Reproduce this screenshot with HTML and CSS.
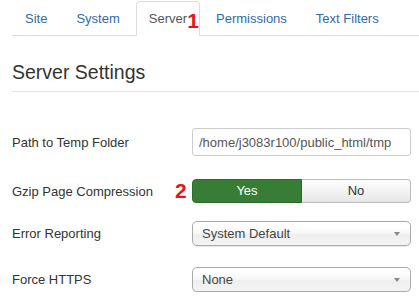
FILE: index.html
```html
<!DOCTYPE html>
<html lang="en">
<head>
  <meta charset="UTF-8">
  <title>Server Settings</title>
  <link rel="stylesheet" href="styles.css">
</head>
<body>
  <ul class="tabs">
    <li><a href="#">Site</a></li>
    <li><a href="#">System</a></li>
    <li class="active"><a href="#">Server</a><span class="marker marker-one">1</span></li>
    <li><a href="#">Permissions</a></li>
    <li><a href="#">Text Filters</a></li>
  </ul>

  <div class="content">
    <h2>Server Settings</h2>

    <div class="control-group">
      <label>Path to Temp Folder</label>
      <input class="field" type="text" value="/home/j3083r100/public_html/tmp">
    </div>

    <div class="control-group group-toggle">
      <label>Gzip Page Compression</label>
      <div class="toggle">
        <span class="marker marker-two">2</span>
        <span class="toggle-btn yes">Yes</span>
        <span class="toggle-btn no">No</span>
      </div>
    </div>

    <div class="control-group">
      <label>Error Reporting</label>
      <div class="select">System Default<span class="arrow"></span></div>
    </div>

    <div class="control-group">
      <label>Force HTTPS</label>
      <div class="select">None<span class="arrow"></span></div>
    </div>
  </div>
</body>
</html>
```

FILE: styles.css
```css
body {
  margin: 0;
  font-family: "Liberation Sans", Arial, sans-serif;
  font-size: 13px;
  color: #333;
  background: #fff;
}
.tabs {
  list-style: none;
  margin: 0 0 0 12px;
  padding: 1px 0 0;
  display: flex;
  gap: 3px;
  border-bottom: 1px solid #ddd;
}
.tabs li {
  position: relative;
}
.tabs a {
  display: block;
  height: 33px;
  line-height: 33px;
  padding: 0 12px;
  margin-bottom: -1px;
  border: 1px solid transparent;
  border-radius: 4px 4px 0 0;
  color: #2f6aa8;
  text-decoration: none;
}
.tabs .active a {
  border-color: #ddd;
  border-bottom-color: #fff;
  background: #fff;
  color: #555;
}
.marker {
  position: absolute;
  font-weight: bold;
  font-size: 21px;
  line-height: 21px;
  color: #e8141b;
}
.marker-one {
  right: 1px;
  top: 9px;
}
.marker-two {
  left: -17px;
  top: 1px;
}
.content {
  padding-left: 12px;
}
h2 {
  margin: 24px 0 36px;
  padding-bottom: 7px;
  font-size: 19.5px;
  line-height: 24px;
  font-weight: normal;
  border-bottom: 1px solid #e3e3e3;
}
.control-group {
  display: flex;
  align-items: center;
  margin-bottom: 18px;
}
.control-group:last-child {
  margin: 21px 0 0;
}
.control-group label {
  width: 180px;
}
.group-toggle {
  margin-top: 23px;
}
.field {
  width: 219px;
  height: 28px;
  box-sizing: border-box;
  padding: 0 6px;
  border: 1px solid #ccc;
  border-radius: 3px;
  font: inherit;
  color: #555;
}
.toggle {
  position: relative;
  display: flex;
  width: 219px;
  height: 24px;
}
.toggle-btn {
  flex: 1;
  box-sizing: border-box;
  line-height: 22px;
  text-align: center;
  border: 1px solid #bbb;
}
.yes {
  background: #377d35;
  border-color: #2d6a2b;
  color: #fff;
  border-radius: 4px 0 0 4px;
}
.no {
  background: linear-gradient(#fff, #e6e6e6);
  border-left: none;
  border-radius: 0 4px 4px 0;
  color: #333;
}
.select {
  position: relative;
  width: 219px;
  height: 25px;
  box-sizing: border-box;
  padding-left: 9px;
  line-height: 23px;
  border: 1px solid #aaa;
  border-radius: 5px;
  background: linear-gradient(#fff 20%, #f6f6f6 50%, #eee 52%, #f4f4f4);
  box-shadow: 0 1px 1px rgba(0,0,0,0.1);
  color: #444;
}
.arrow {
  position: absolute;
  right: 10px;
  top: 10px;
  border-left: 3px solid transparent;
  border-right: 3px solid transparent;
  border-top: 4px solid #888;
}
```
